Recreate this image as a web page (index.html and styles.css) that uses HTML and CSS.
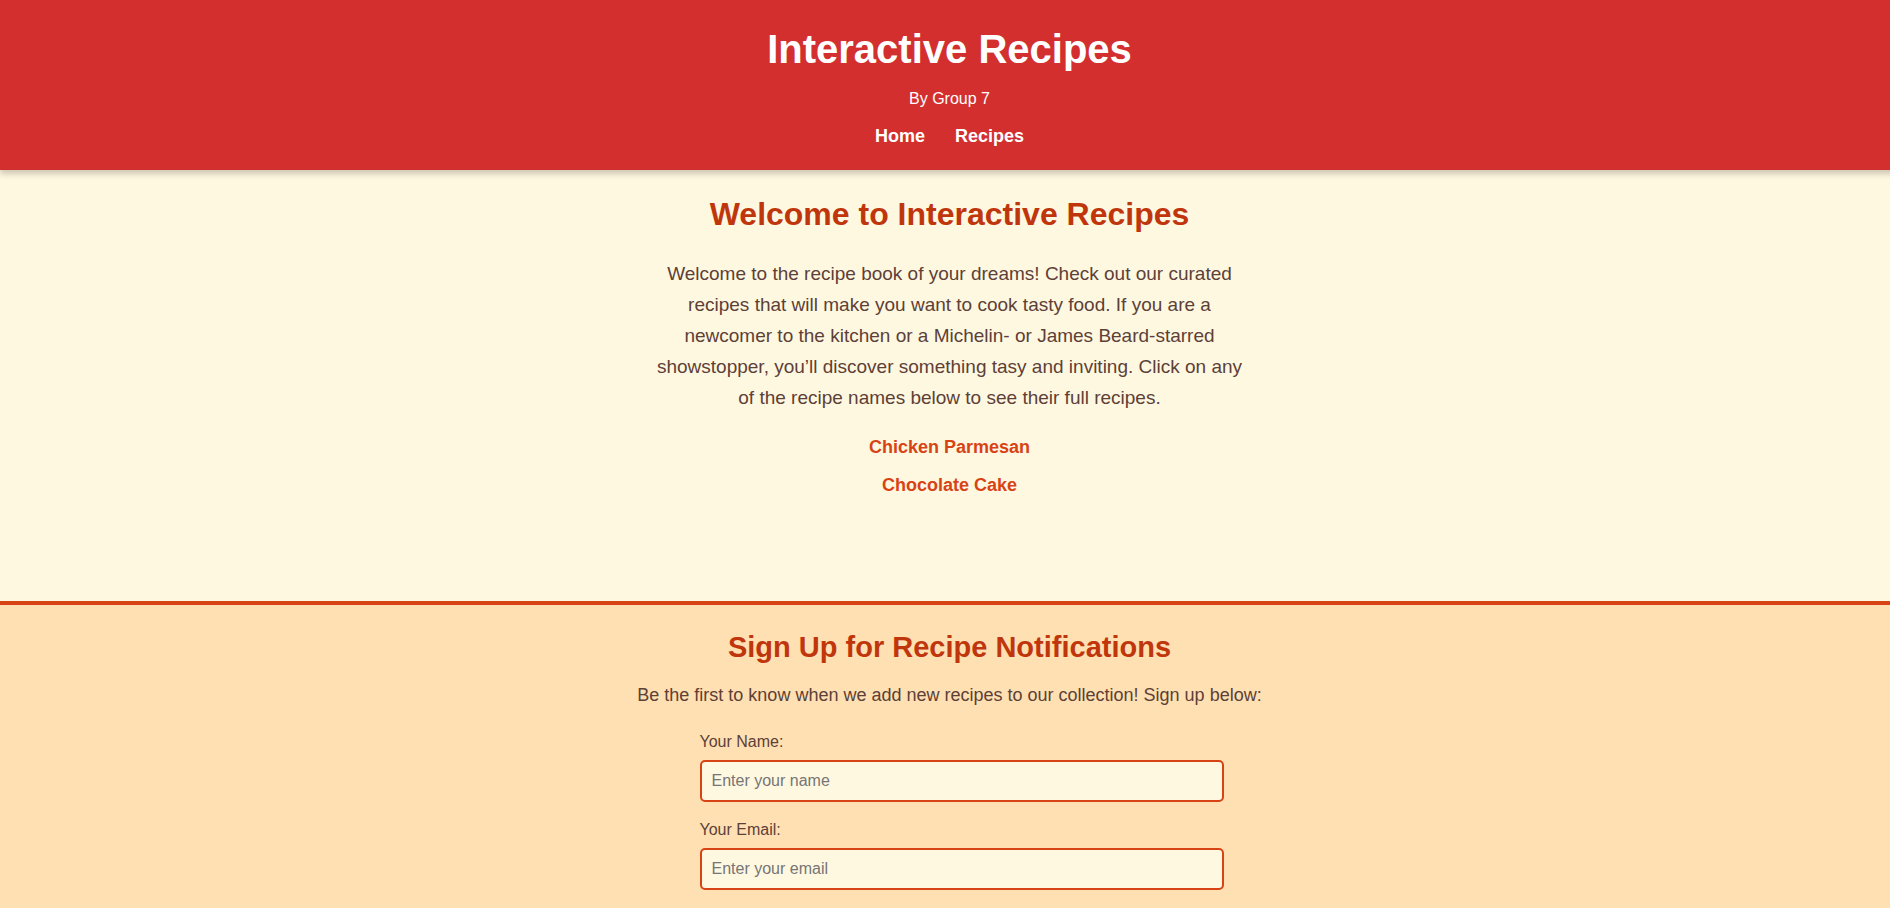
FILE: index.html
```html
<!DOCTYPE html>
<html lang="en">
<head>
<meta charset="utf-8">
<title>Interactive Recipes</title>
<link rel="stylesheet" href="styles.css">
</head>
<body>
<header class="site-header">
  <h1 class="site-title">Interactive Recipes</h1>
  <p class="byline">By Group 7</p>
  <nav class="site-nav">
    <a href="#home">Home</a>
    <a href="#recipes">Recipes</a>
  </nav>
</header>
<main class="intro" id="home">
  <h2 class="intro-title">Welcome to Interactive Recipes</h2>
  <p class="intro-text">Welcome to the recipe book of your dreams! Check out our curated recipes that will make you want to cook tasty food. If you are a newcomer to the kitchen or a Michelin- or James Beard-starred showstopper, you’ll discover something tasy and inviting. Click on any of the recipe names below to see their full recipes.</p>
  <ul class="recipe-list" id="recipes">
    <li><a href="#chicken-parmesan">Chicken Parmesan</a></li>
    <li><a href="#chocolate-cake">Chocolate Cake</a></li>
  </ul>
</main>
<section class="signup">
  <h2 class="signup-title">Sign Up for Recipe Notifications</h2>
  <p class="signup-text">Be the first to know when we add new recipes to our collection! Sign up below:</p>
  <form class="signup-form">
    <label for="name">Your Name:</label>
    <input type="text" id="name" name="name" placeholder="Enter your name">
    <label for="email">Your Email:</label>
    <input type="email" id="email" name="email" placeholder="Enter your email">
  </form>
</section>
</body>
</html>
```
FILE: styles.css
```css
html {
  overflow-x: hidden;
}

body {
  margin: 0 -9px 0 0;
  font-family: "Liberation Sans", Arial, sans-serif;
  font-size: 16px;
  line-height: 26px;
  color: #5d4037;
  background: #fff8e1;
}

.site-header {
  padding: 20px;
  text-align: center;
  color: #fff;
  background: #d32f2f;
  box-shadow: 0 4px 6px rgba(0, 0, 0, 0.2);
}

.site-title {
  margin: 0;
  font-size: 40px;
  line-height: 58px;
}

.byline {
  margin: 8px 0 10px;
}

.site-nav {
  display: flex;
  justify-content: center;
  gap: 30px;
  font-size: 18px;
  line-height: 28px;
}

.site-nav a {
  font-weight: bold;
  color: #fff;
  text-decoration: none;
}

.intro {
  padding: 20px 20px 92px;
  text-align: center;
}

.intro-title {
  margin: 0 0 20px;
  font-size: 32px;
  line-height: 48px;
  color: #bf360c;
}

.intro-text {
  max-width: 600px;
  margin: 0 auto 20px;
  font-size: 19px;
  line-height: 31px;
}

.recipe-list {
  margin: 0;
  padding: 0;
  list-style: none;
  font-size: 18px;
  line-height: 28px;
}

.recipe-list li {
  margin-bottom: 10px;
}

.recipe-list a {
  font-weight: bold;
  color: #d84315;
  text-decoration: none;
}

.signup {
  padding: 20px;
  text-align: center;
  background: #ffe0b2;
  border-top: 4px solid #d84315;
}

.signup-title {
  margin: 0 0 12px;
  font-size: 29px;
  line-height: 44px;
  color: #bf360c;
}

.signup-text {
  margin: 0 0 20px;
  font-size: 18px;
  line-height: 28px;
}

.signup-form {
  max-width: 500px;
  margin: 0 auto;
  text-align: left;
}

.signup-form label {
  display: block;
  margin-bottom: 5px;
}

.signup-form input {
  display: block;
  width: 100%;
  margin: 0 0 15px;
  padding: 10px;
  font: inherit;
  line-height: 18px;
  color: #5d4037;
  background: #fff8e1;
  border: 2px solid #d84315;
  border-radius: 5px;
}
```
